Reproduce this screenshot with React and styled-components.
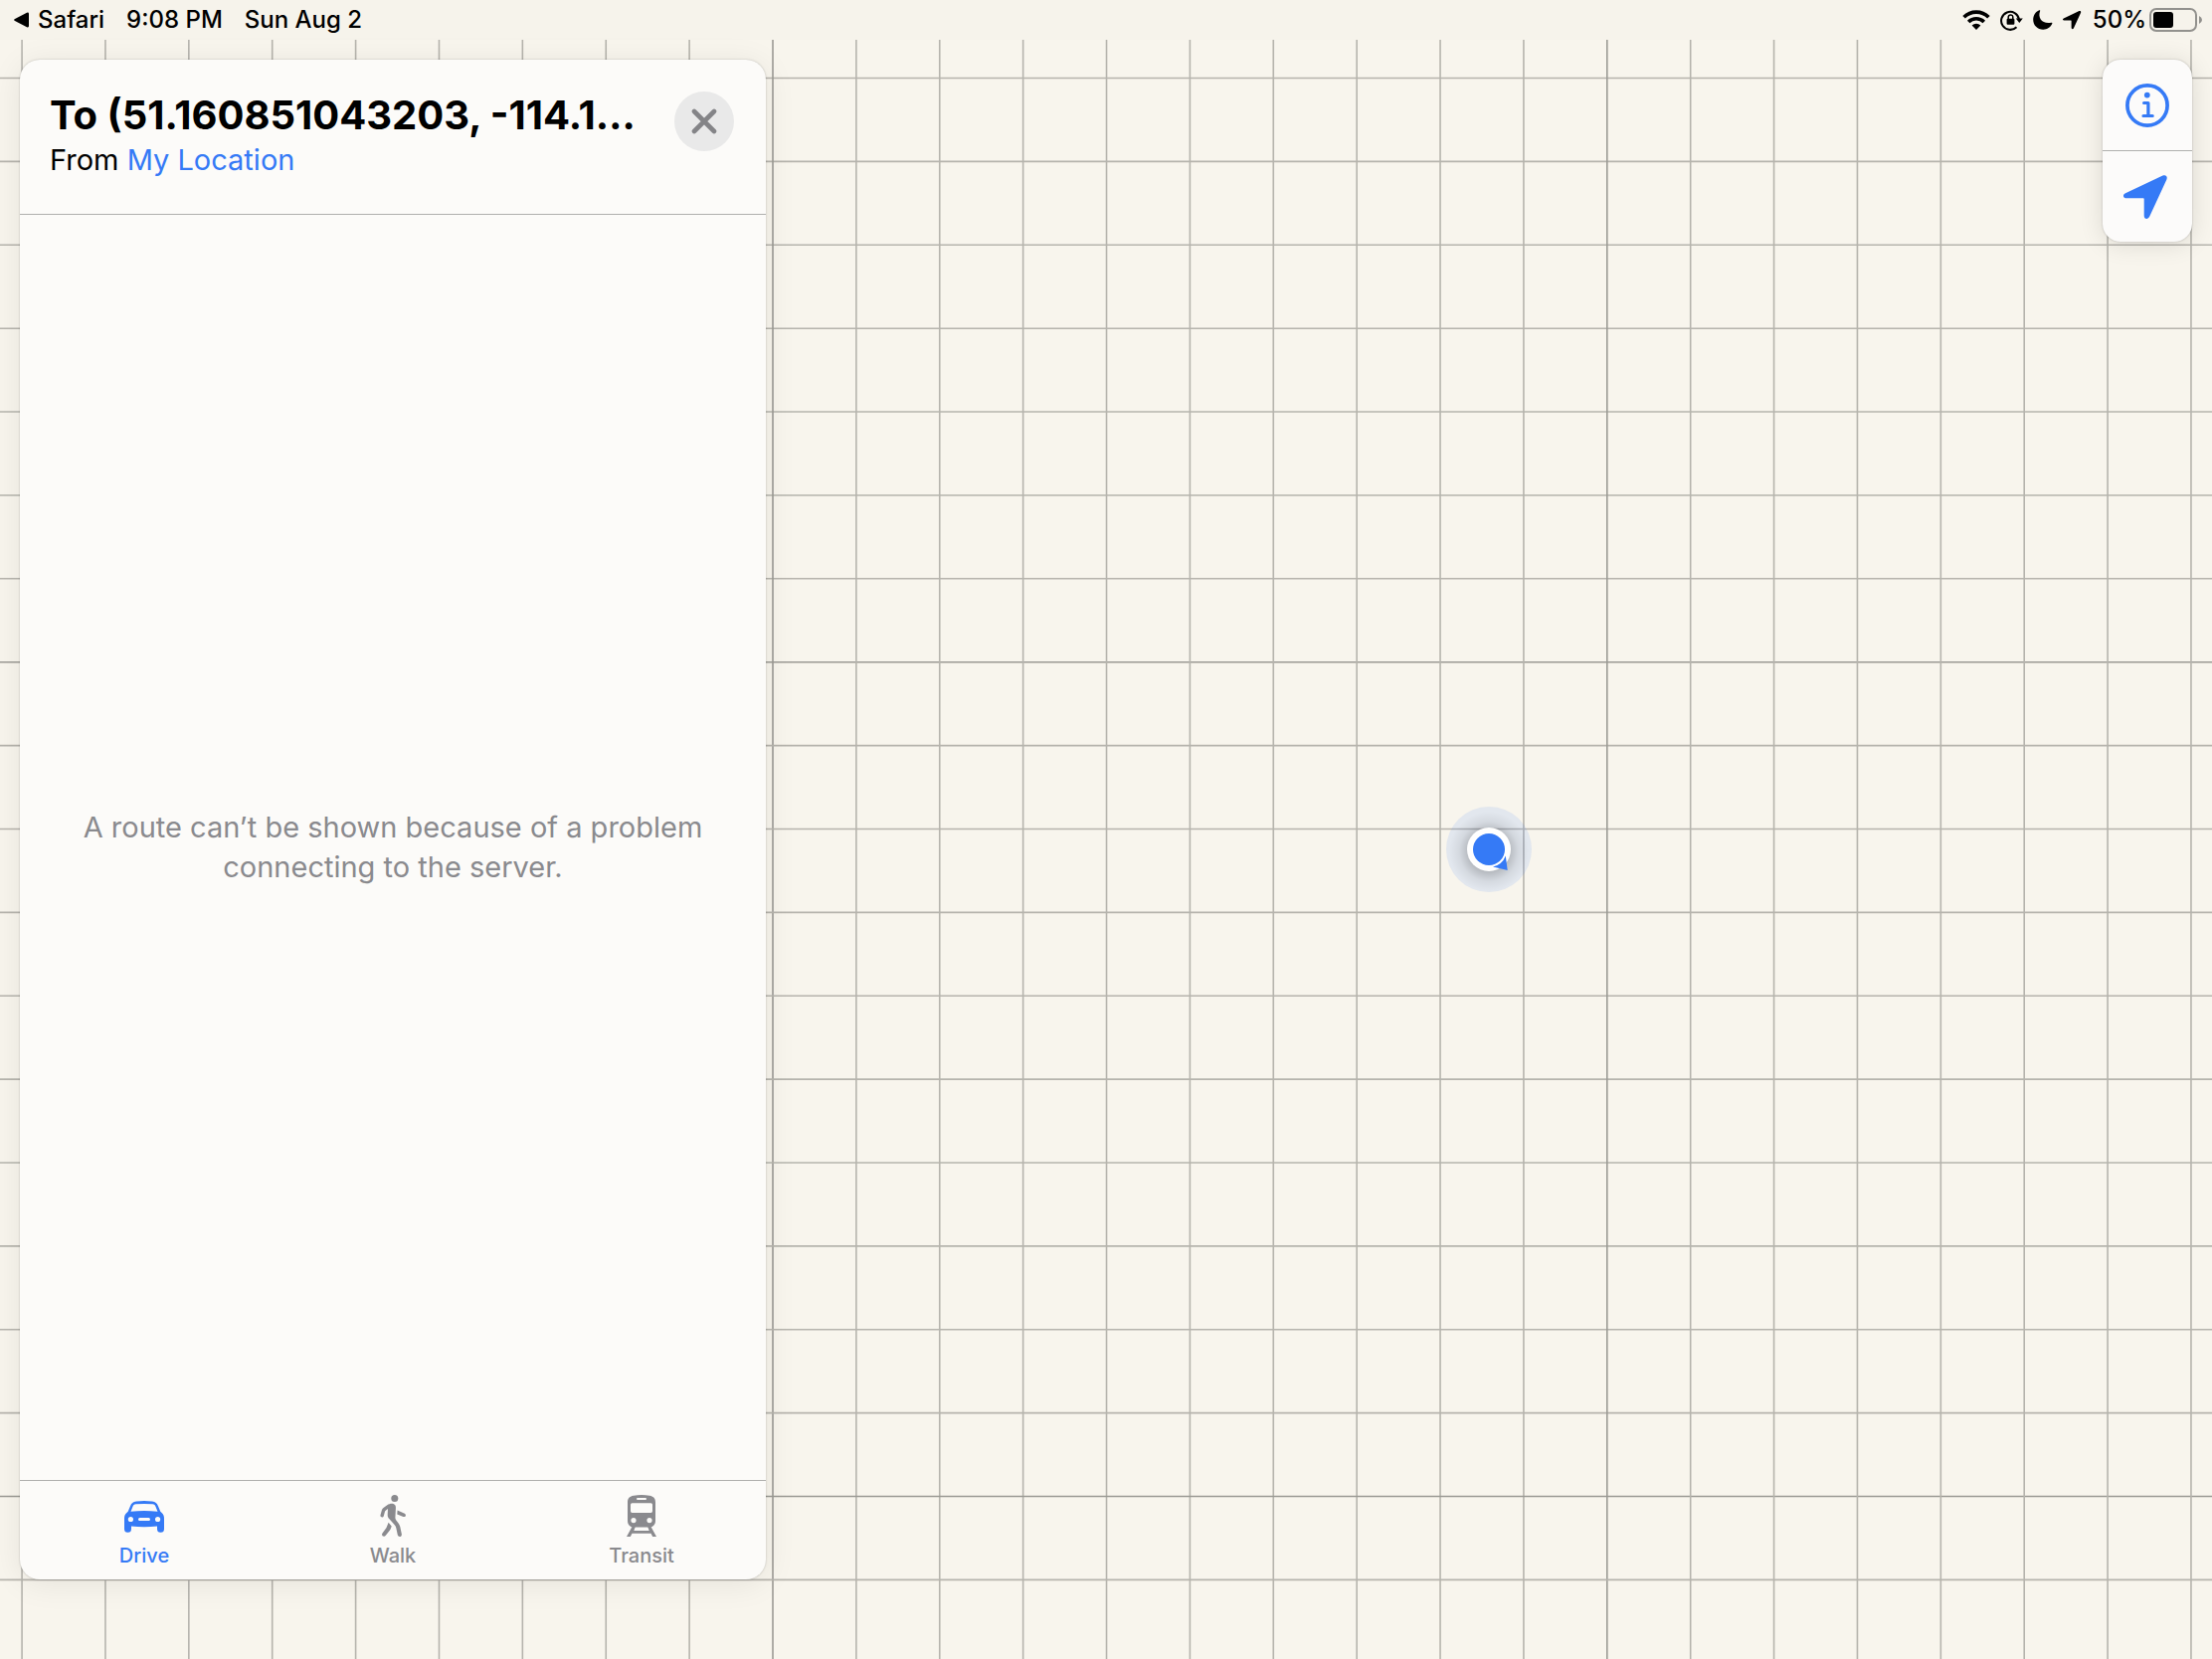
import React, { useState } from 'react';
import styled, { createGlobalStyle } from 'styled-components';

const BLUE = '#357af6';
const GRAY = '#8a8a8e';
const DIVIDER = '#b0b0ae';

const GlobalStyle = createGlobalStyle`
  * {
    box-sizing: border-box;
  }

  body {
    margin: 0;
    background-color: #f8f5ed;
    color: #000000;
    font-family: Inter, "Liberation Sans", sans-serif;
  }

  button {
    margin: 0;
    padding: 0;
    border: none;
    background: none;
    font: inherit;
    color: inherit;
    cursor: pointer;
  }

  svg {
    display: block;
    flex-shrink: 0;
  }
`;

const Screen = styled.div`
  display: flex;
  flex-direction: column;
  height: 100vh;
  overflow: hidden;
`;

const StatusBar = styled.header`
  display: flex;
  align-items: center;
  justify-content: space-between;
  height: 40px;
  padding: 0 9px 0 14px;
  background-color: #f6f3eb;
  font-size: 24px;
  font-weight: 500;
  line-height: 30px;
`;

const StatusGroup = styled.div`
  display: flex;
  align-items: center;
  gap: ${({ $gap }) => $gap}px;
`;

const BackLink = styled.a`
  display: flex;
  align-items: center;
  gap: 8px;
  color: inherit;
  text-decoration: none;
`;

const Battery = styled.span`
  display: flex;
  align-items: center;
  gap: 3px;
`;

const MapArea = styled.main`
  display: grid;
  grid-template-columns: 770px minmax(0, 1fr);
  grid-template-rows: minmax(0, 1fr);
  flex: 1;
  min-height: 0;
`;

const MapGrid = styled.svg`
  grid-area: 1 / 1 / 2 / 3;
  width: 100%;
  height: 100%;
`;

const Panel = styled.section`
  grid-area: 1 / 1 / 2 / 2;
  display: flex;
  flex-direction: column;
  margin: 20px 0 80px 20px;
  border-radius: 20px;
  background-color: #fcfbf9;
  box-shadow: 0 0 2px rgba(0, 0, 0, 0.25), 0 4px 32px rgba(0, 0, 0, 0.08);
  overflow: hidden;
  z-index: 1;
`;

const PanelHeader = styled.div`
  display: flex;
  align-items: flex-start;
  justify-content: space-between;
  height: 156px;
  padding: 32px 32px 0 30px;
  border-bottom: 1px solid ${DIVIDER};
`;

const Title = styled.h1`
  margin: 0;
  font-size: 40px;
  font-weight: 700;
  line-height: 48px;
  white-space: nowrap;
`;

const Origin = styled.p`
  margin: 0;
  font-size: 29px;
  line-height: 42px;

  a {
    color: ${BLUE};
    text-decoration: none;
  }
`;

const CloseButton = styled.button`
  display: flex;
  align-items: center;
  justify-content: center;
  width: 60px;
  height: 60px;
  border-radius: 50%;
  background-color: #e9e9e9;
  color: #848487;
`;

const PanelBody = styled.div`
  display: flex;
  align-items: center;
  justify-content: center;
  flex: 1;
  padding: 0 40px;
`;

const Message = styled.p`
  margin: 0;
  color: ${GRAY};
  font-size: 29px;
  line-height: 40px;
  text-align: center;
`;

const Tabs = styled.nav`
  display: grid;
  grid-template-columns: repeat(3, 1fr);
  height: 100px;
  border-top: 1px solid ${DIVIDER};
`;

const Tab = styled.button`
  display: flex;
  flex-direction: column;
  align-items: center;
  gap: 6px;
  padding-top: 14px;
  color: ${({ $active }) => ($active ? BLUE : GRAY)};
  font-size: 20px;
  font-weight: 500;
  line-height: 26px;
`;

const Controls = styled.div`
  grid-area: 1 / 2 / 2 / 3;
  justify-self: end;
  align-self: start;
  margin: 20px 20px 0 0;
  border-radius: 18px;
  background-color: #fcfbfa;
  box-shadow: 0 0 2px rgba(0, 0, 0, 0.25), 0 2px 24px rgba(0, 0, 0, 0.12);
  z-index: 1;
`;

const ControlButton = styled.button`
  display: flex;
  align-items: center;
  justify-content: center;
  width: 90px;
  height: 91px;
  color: ${BLUE};

  & + & {
    height: 92px;
    border-top: 1px solid ${DIVIDER};
  }
`;

const LocationPin = styled.svg`
  grid-area: 1 / 2 / 2 / 3;
  place-self: center;
`;

const STEP = 83.88;
const MAJOR_X = 777;
const MAJOR_Y = 625.7;
const offsets = Array.from({ length: 61 }, (_, i) => i - 20);

const GridLines = () => (
  <MapGrid aria-hidden="true" strokeWidth="1.6">
    {offsets.map((n) => {
      const x = MAJOR_X + n * STEP;
      const y = MAJOR_Y + n * STEP;
      const stroke = n % 10 === 0 ? '#9b9a94' : '#b6b4ad';
      return (
        <g key={n} stroke={stroke}>
          <line x1={x} x2={x} y1="0" y2="100%" />
          <line x1="0" x2="100%" y1={y} y2={y} />
        </g>
      );
    })}
  </MapGrid>
);

const BackIcon = () => (
  <svg width="16" height="16" viewBox="0 0 16 16" fill="currentColor">
    <path d="M1 6.9 13 .7Q15 0 15 2v12q0 2-2 1.300L1 9.100Q-.8 8 1 6.900Z" />
  </svg>
);

const WifiIcon = () => (
  <svg width="28" height="20" viewBox="0 0 28 20" fill="none" stroke="currentColor">
    <path d="M1.600 7.200a17.600 17.600 0 0 1 24.800 0" strokeWidth="3.700" />
    <path d="M6.200 12a11 11 0 0 1 15.600 0" strokeWidth="3.600" />
    <path d="M14 20l-4.400-4.500a6.200 6.200 0 0 1 8.800 0Z" fill="currentColor" stroke="none" />
  </svg>
);

const RotationLockIcon = () => (
  <svg width="23" height="22" viewBox="0 0 23 22" fill="none" stroke="currentColor">
    <path d="M16.500 18.200A9 9 0 1 1 19 10.500" strokeWidth="2" />
    <path d="M15.800 9.600h7L19.300 14Z" fill="currentColor" stroke="none" />
    <rect x="6.600" y="9.800" width="7.800" height="6" rx="1" fill="currentColor" stroke="none" />
    <path d="M8.200 10V8.200a2.300 2.300 0 0 1 4.600 0V10" strokeWidth="1.500" />
  </svg>
);

const MoonIcon = () => (
  <svg width="20" height="20" viewBox="0 0 20 20" fill="currentColor">
    <path d="M6.300.2C7 0 7.400.5 7.100 1.200 4.500 7.800 9.300 14.500 18.300 12.800c.8-.2 1.300.3 1 1C17.700 17.500 14.300 19.700 10.300 19.700 4.500 19.700.2 15.500.2 9.800.2 5.500 2.500 1.800 6.300.2Z" />
  </svg>
);

const ArrowIcon = ({ size }) => (
  <svg width={size} height={size} viewBox="0 -2 48 48" fill="currentColor">
    <path d="M2 18.200 39.500.6c2.900-1.300 5.100.8 3.900 3.800L26.300 41.500c-1.700 3.700-5.600 3-5.600-.8V24.100q0-.8-.8-.8H3.200C-.6 23.300-1.200 19.700 2 18.200Z" />
  </svg>
);

const BatteryIcon = () => (
  <svg width="54" height="24" viewBox="0 0 54 24">
    <rect x="1" y="1" width="46" height="22" rx="6" fill="none" stroke="#92918d" strokeWidth="2" />
    <rect x="4" y="4" width="20" height="16" rx="3" fill="#000000" />
    <path d="M50 8q3 1.500 3 4t-3 4Z" fill="#92918d" />
  </svg>
);

const CloseIcon = () => (
  <svg width="26" height="26" viewBox="0 0 26 26" fill="none" stroke="currentColor" strokeWidth="4.600" strokeLinecap="round">
    <path d="M3 3l20 20M23 3L3 23" />
  </svg>
);

const InfoIcon = () => (
  <svg width="44" height="44" viewBox="0 0 44 44" fill="none" stroke="currentColor" strokeWidth="3.200" strokeLinecap="round" strokeLinejoin="round">
    <circle cx="22" cy="22" r="20.100" strokeWidth="3.700" />
    <circle cx="21.800" cy="11.600" r="2.900" fill="currentColor" stroke="none" />
    <path d="M18.600 19.500h4.300v12.800M18 32.500h9.200" />
  </svg>
);

const CarIcon = () => (
  <svg width="40" height="42" viewBox="0 0 40 42" fill="currentColor">
    <path
      fillRule="evenodd"
      d="M12 6.600Q20 5.600 28 6.600C31.300 7 32.800 8.400 34 11.200L36.300 16.800C39 19 40 20.600 40 24v10.300a3.500 3.500 0 0 1-7 0V31.400Q20 33 7 31.400v2.900a3.500 3.500 0 0 1-7 0V24C0 20.600 1 19 3.700 16.800L6 11.200C7.200 8.400 8.700 7 12 6.600ZM11.700 9.300C9.800 9.500 9.100 10.300 8.400 12L6.500 16.700Q20 15.300 33.500 16.700L31.600 12c-.7-1.700-1.400-2.500-3.300-2.700Q20 8.500 11.700 9.300ZM6.400 21.900a2.600 2.600 0 1 0 0 5.200 2.600 2.600 0 0 0 0-5.200ZM33.600 21.900a2.600 2.600 0 1 0 0 5.200 2.600 2.600 0 0 0 0-5.200ZM15.500 23a1.500 1.500 0 0 0 0 3h9a1.500 1.500 0 0 0 0-3Z"
    />
  </svg>
);

const WalkIcon = () => (
  <svg width="28" height="42" viewBox="0 0 28 42" fill="currentColor">
    <circle cx="15.800" cy="3.600" r="3.500" />
    <path d="M8.300 10.200C10.500 8.700 13.200 8.300 15 9.200c2 1 2 2.700 1.900 4.500L16.400 23c0 1 .3 1.700.9 2.400 2 2.400 3.300 4 4 6.500l1.500 7.300c.7 3-3.200 3.800-4 1l-1.500-7c-.3-1.200-.8-2-1.500-2.900l-5.300-6c-1.500-1.700-1.900-2.600-1.800-4.500l.3-5.700-2 1.400c-.7.500-.9 1-1.200 1.900l-1 3.800C4.100 23.300.9 22.500 1.500 20.200L2.900 15.200c.3-1 .8-1.700 1.600-2.200Z" />
    <path d="M9.600 27.800l3.100 3.600-.9 2.500q-.3.800-.8 1.500l-4.200 5.400c-1.800 2.300-5 0-3.300-2.400l4-5.300Z" />
    <path d="M18.600 15.600l7.200 3.200c2.100 1 1 4-1.300 3.100l-6.200-2.500Z" />
  </svg>
);

const TrainIcon = () => (
  <svg width="30" height="42" viewBox="0 0 30 42" fill="currentColor">
    <path
      fillRule="evenodd"
      d="M7 .8Q15-.6 23 .8C27.500 1.600 29 4 29 7.500V26c0 4-2.500 6.600-6.500 6.600h-15C3.500 32.600 1 30 1 26V7.500C1 4 2.500 1.600 7 .8ZM11 3q-1 0-1 1t1 1h8q1 0 1-1t-1-1ZM5.500 8.300Q4 8.300 4 9.800v6.400q0 1.800 1.500 1.800h19q1.500 0 1.500-1.800V9.800q0-1.500-1.500-1.500ZM7 23a2.600 2.600 0 1 0 0 5.200A2.600 2.600 0 0 0 7 23ZM23 23a2.600 2.600 0 1 0 0 5.200 2.600 2.600 0 0 0 0-5.200Z"
    />
    <path d="M5.500 32h3.300l-1.500 4h15.400l-1.500-4h3.300L30 42h-3.800l-1.700-3.200h-19L3.800 42H0Z" />
  </svg>
);

const TABS = [
  { id: 'drive', label: 'Drive', Icon: CarIcon },
  { id: 'walk', label: 'Walk', Icon: WalkIcon },
  { id: 'transit', label: 'Transit', Icon: TrainIcon },
];

const RoutePanel = () => {
  const [mode, setMode] = useState('drive');

  return (
    <Panel>
      <PanelHeader>
        <div>
          <Title>To (51.160851043203, -114.1…</Title>
          <Origin>
            From <a href="#origin">My Location</a>
          </Origin>
        </div>
        <CloseButton aria-label="Close">
          <CloseIcon />
        </CloseButton>
      </PanelHeader>
      <PanelBody>
        <Message>
          A route can’t be shown because of a problem
          <br />
          connecting to the server.
        </Message>
      </PanelBody>
      <Tabs>
        {TABS.map(({ id, label, Icon }) => (
          <Tab key={id} $active={mode === id} onClick={() => setMode(id)}>
            <Icon />
            {label}
          </Tab>
        ))}
      </Tabs>
    </Panel>
  );
};

const UserLocation = () => (
  <LocationPin width="88" height="88" viewBox="-44 -44 88 88" role="img" aria-label="My Location">
    <defs>
      <radialGradient id="pinShadow">
        <stop offset="0.5" stopColor="#000000" stopOpacity="0.2" />
        <stop offset="0.75" stopColor="#000000" stopOpacity="0.06" />
        <stop offset="1" stopColor="#000000" stopOpacity="0" />
      </radialGradient>
    </defs>
    <circle r="43" fill={BLUE} fillOpacity="0.11" />
    <circle r="40" cy="2" fill="url(#pinShadow)" />
    <circle r="22" fill="#ffffff" />
    <circle r="16" fill={BLUE} />
    <path d="M4 17.500A18 18 0 0 0 16.800 6.500L18.700 21Z" fill={BLUE} />
  </LocationPin>
);

const App = () => (
  <>
    <GlobalStyle />
    <Screen>
      <StatusBar>
        <StatusGroup $gap={22}>
          <BackLink href="#safari">
            <BackIcon />
            Safari
          </BackLink>
          <span>9:08 PM</span>
          <span>Sun Aug 2</span>
        </StatusGroup>
        <StatusGroup $gap={10}>
          <WifiIcon />
          <RotationLockIcon />
          <MoonIcon />
          <ArrowIcon size={20} />
          <Battery>
            50%
            <BatteryIcon />
          </Battery>
        </StatusGroup>
      </StatusBar>
      <MapArea>
        <GridLines />
        <RoutePanel />
        <UserLocation />
        <Controls>
          <ControlButton aria-label="Map information">
            <InfoIcon />
          </ControlButton>
          <ControlButton aria-label="Show my location">
            <ArrowIcon size={48} />
          </ControlButton>
        </Controls>
      </MapArea>
    </Screen>
  </>
);

export default App;
